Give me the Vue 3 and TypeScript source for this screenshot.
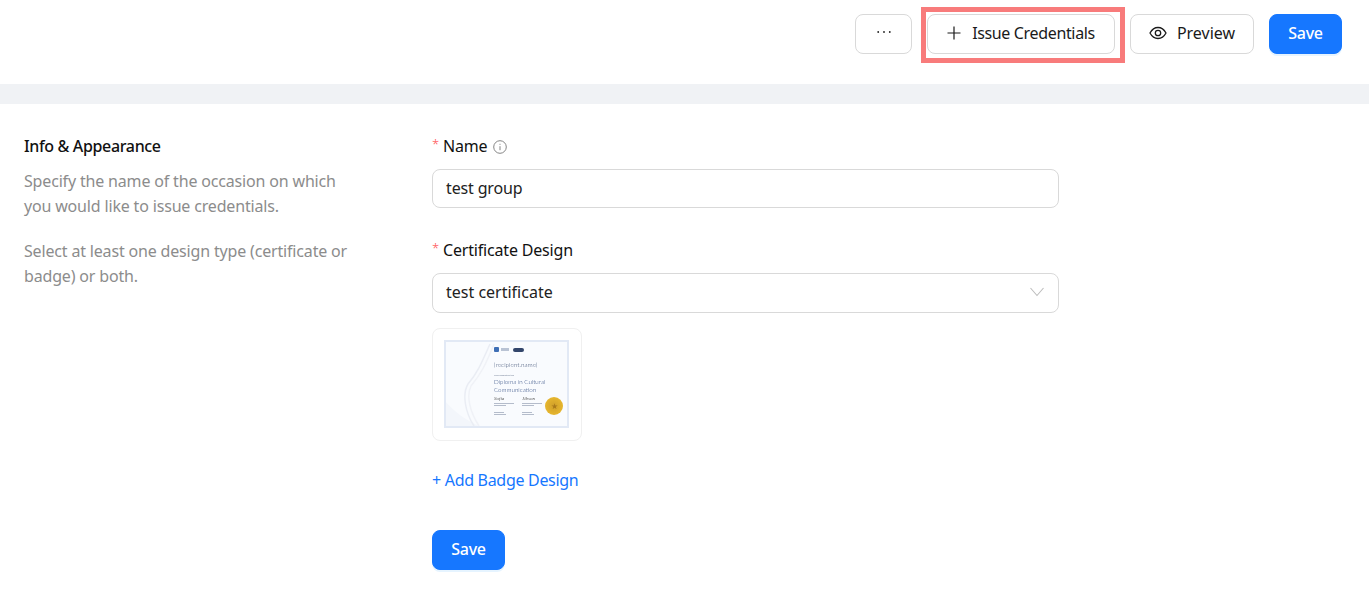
<script setup lang="ts">
const helpText = [
  'Specify the name of the occasion on which you would like to issue credentials.',
  'Select at least one design type (certificate or badge) or both.',
]
</script>

<template>
  <div class="page">
    <header class="topbar">
      <button class="btn more">
        <svg width="14" height="4" viewBox="0 0 14 4" fill="#222">
          <circle cx="1.200" cy="2" r="0.900" />
          <circle cx="7" cy="2" r="0.900" />
          <circle cx="12.800" cy="2" r="0.900" />
        </svg>
      </button>
      <div class="highlight-wrap">
        <button class="btn issue">
          <svg width="14" height="14" viewBox="0 0 14 14" fill="none" stroke="#1a1a1a" stroke-width="1.200">
            <path d="M7 0.500v13M0.500 7h13" />
          </svg>
          <span>Issue Credentials</span>
        </button>
        <div class="highlight"></div>
      </div>
      <button class="btn preview">
        <svg width="18" height="18" viewBox="0 0 18 18" fill="none" stroke="#1a1a1a" stroke-width="1.300">
          <path d="M1 9C3 5.300 5.800 3.500 9 3.500s6 1.800 8 5.500c-2 3.700-4.800 5.500-8 5.500S3 12.700 1 9z" />
          <circle cx="9" cy="9" r="2.700" />
        </svg>
        Preview
      </button>
      <button class="btn primary">Save</button>
    </header>
    <div class="band"></div>
    <main class="content">
      <aside class="intro">
        <h2>Info &amp; Appearance</h2>
        <p v-for="t in helpText" :key="t">{{ t }}</p>
      </aside>
      <section class="form">
        <label class="label">
          <span class="req">*</span>Name
          <svg class="info" width="14" height="14" viewBox="0 0 14 14" fill="none" stroke="#777" stroke-width="0.900">
            <circle cx="7" cy="7" r="6.300" />
            <path d="M7 6.200v4M7 3.800v1" />
          </svg>
        </label>
        <div class="field">test group</div>
        <label class="label second">
          <span class="req">*</span>Certificate Design
        </label>
        <div class="field select">
          test certificate
          <svg width="14" height="10" viewBox="0 0 14 10" fill="none" stroke="#bdbdbd" stroke-width="1.100">
            <path d="M0.500 1 7 8.500 13.500 1" />
          </svg>
        </div>
        <div class="thumb">
          <div class="cert">
            <svg class="wave" viewBox="0 0 125 88" preserveAspectRatio="none" fill="none">
              <path d="M0 60C10 72 24 82 40 88H0z" fill="#f3f6fb" />
              <path d="M46 4C38 22 34 32 24 44c-6 10-3 28 6 42" stroke="#eaedf4" stroke-width="1.500" />
              <path d="M50 4C42 24 37 34 27 46c-5 10-1 26 8 40" stroke="#f0f2f7" stroke-width="1.500" />
            </svg>
            <div class="cert-logos">
              <i class="logo-a"></i><i class="logo-b"></i><i class="logo-c"></i>
            </div>
            <div class="cert-name">[recipient.name]</div>
            <div class="cert-small">has completed the</div>
            <div class="cert-title">Diploma in Cultural<br />Communication</div>
            <div class="cert-sigs">
              <div><em>Sofia</em><b></b><b class="short"></b><b class="gap"></b><b class="short"></b></div>
              <div><em>Jibson</em><b></b><b class="short"></b><b class="gap"></b><b class="short"></b></div>
            </div>
            <div class="seal">★</div>
          </div>
        </div>
        <a class="add">+ Add Badge Design</a>
        <button class="btn primary form-save">Save</button>
      </section>
    </main>
  </div>
</template>

<style>
html,
body {
  margin: 0;
  background: #fff;
}
</style>

<style scoped>
.page {
  width: 1369px;
  height: 596px;
  overflow: hidden;
  background: #fff;
  font-family: "Noto Sans", "Liberation Sans", sans-serif;
  font-size: 16px;
  color: #111;
}

.topbar {
  height: 84px;
  box-sizing: border-box;
  padding: 14px 27px 0 0;
  display: flex;
  justify-content: flex-end;
  align-items: flex-start;
  gap: 15px;
}

.band {
  height: 20px;
  background: #f0f2f5;
}

.btn {
  height: 40px;
  box-sizing: border-box;
  border: 1px solid #d9d9d9;
  border-radius: 8px;
  background: #fff;
  font: inherit;
  color: #1a1a1a;
  display: flex;
  align-items: center;
  justify-content: center;
  padding: 0 0 2px;
}

.more {
  width: 57px;
  padding-bottom: 4px;
}

.issue {
  width: 188px;
  gap: 11px;
  letter-spacing: -0.35px;
}

.preview {
  width: 124px;
  gap: 10px;
}

.primary {
  width: 73px;
  background: #1677ff;
  border-color: #1677ff;
  color: #fff;
  font-weight: 500;
  letter-spacing: -0.3px;
  box-shadow: 0 2px 0 rgba(5, 145, 255, 0.1);
}

.highlight-wrap {
  position: relative;
}

.highlight {
  position: absolute;
  left: -6px;
  top: -7px;
  width: 204px;
  height: 56px;
  box-sizing: border-box;
  border: 5px solid #f87b7b;
  pointer-events: none;
}

.content {
  display: flex;
  padding: 30px 0 0 24px;
}

.intro {
  width: 408px;
  flex: none;
  box-sizing: border-box;
  padding-right: 73px;
}

.intro h2 {
  margin: 0 0 10px;
  font-size: 16px;
  line-height: 25px;
  font-weight: 500;
  letter-spacing: -0.35px;
  color: #111;
}

.intro p {
  margin: 0 0 20px;
  line-height: 25px;
  letter-spacing: -0.17px;
  color: #8c8c8c;
}

.form {
  width: 627px;
  display: flex;
  flex-direction: column;
  align-items: flex-start;
}

.label {
  display: flex;
  align-items: center;
  height: 25px;
  line-height: 25px;
  margin-bottom: 10px;
  letter-spacing: -0.18px;
}

.second {
  margin-top: 30px;
}

.req {
  color: #ff4d4f;
  width: 11px;
  font-size: 13px;
  font-weight: 300;
  position: relative;
  top: -2px;
}

.info {
  margin-left: 6px;
}

.field {
  width: 100%;
  height: 39px;
  box-sizing: border-box;
  border: 1px solid #d9d9d9;
  border-radius: 8px;
  padding: 0 14px 2px 13px;
  display: flex;
  align-items: center;
  justify-content: space-between;
  letter-spacing: -0.15px;
  color: #222;
}

.select {
  height: 40px;
  letter-spacing: 0;
}

.thumb {
  margin-top: 15px;
  width: 150px;
  height: 113px;
  box-sizing: border-box;
  border: 1px solid #f0f0f0;
  border-radius: 8px;
  padding: 11px 0 0 11px;
}

.cert {
  position: relative;
  width: 125px;
  height: 88px;
  box-sizing: border-box;
  border: 2px solid #e2e9f5;
  background: #f9fbfe;
  color: #3a4d72;
  overflow: hidden;
  padding: 4px 0 0 48px;
  font-family: Lato, "Liberation Sans", sans-serif;
  filter: blur(0.35px);
}

.wave {
  position: absolute;
  left: -2px;
  top: -2px;
  width: 125px;
  height: 88px;
}

.cert > div {
  position: relative;
}

.cert-logos {
  display: flex;
  align-items: center;
  gap: 2px;
  height: 7px;
}

.logo-a {
  width: 5px;
  height: 5px;
  background: #3f6fb5;
  border-radius: 1px;
}

.logo-b {
  width: 8px;
  height: 3px;
  background: #b9c3d4;
  margin-right: 2px;
}

.logo-c {
  width: 11px;
  height: 4px;
  background: #33466b;
  border-radius: 2px;
}

.cert-name {
  font-size: 6.400px;
  font-weight: 300;
  line-height: 9px;
  margin-top: 7px;
  white-space: nowrap;
}

.cert-small {
  font-size: 2.500px;
  line-height: 3px;
  margin-top: 5px;
  color: #7a869c;
}

.cert-title {
  font-size: 6.200px;
  font-weight: 300;
  line-height: 8px;
  margin-top: 1px;
  white-space: nowrap;
  color: #2e4a80;
}

.cert-sigs {
  display: flex;
  gap: 8px;
  margin-top: 1px;
}

.cert-sigs > div {
  width: 20px;
}

.cert-sigs em {
  display: block;
  font-family: "Liberation Serif", serif;
  font-size: 5px;
  line-height: 7px;
  color: #555;
}

.cert-sigs b {
  display: block;
  height: 1px;
  width: 100%;
  margin-top: 1px;
  background: #b4bccb;
}

.cert-sigs b.short {
  width: 60%;
}

.cert-sigs b.gap {
  margin-top: 6px;
  width: 50%;
}

.cert > .seal {
  position: absolute;
  right: 4px;
  top: 55px;
  width: 18px;
  height: 18px;
  border-radius: 50%;
  background: radial-gradient(circle, #cf9f2a 0, #e6b62e 70%, #dca826 100%);
  color: #a9791b;
  font-size: 8px;
  line-height: 18px;
  text-align: center;
}

.add {
  margin-top: 27px;
  line-height: 25px;
  letter-spacing: -0.3px;
  color: #1677ff;
}

.form-save {
  margin-top: 37px;
}
</style>
